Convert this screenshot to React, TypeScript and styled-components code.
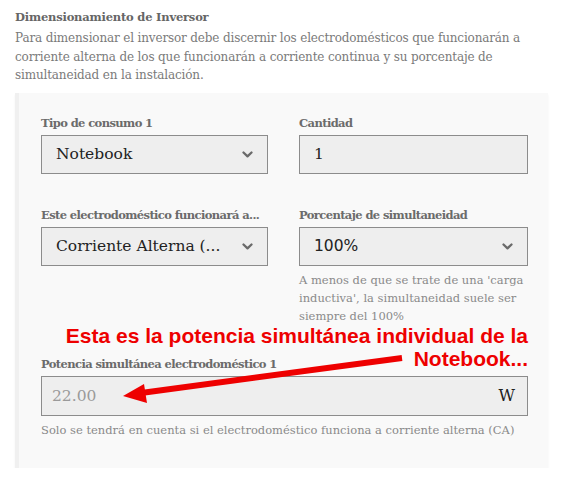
import React from 'react'
import styled, {createGlobalStyle} from 'styled-components';

const Global = createGlobalStyle`
  html, body { margin: 0; padding: 0; background: #fff; }
  body { font-family: "DejaVu Serif", "Liberation Serif", serif; }
`;

const Page = styled.div`
  padding: 8px 16px 0 15px;
  width: 564px;
  box-sizing: border-box;
`;

const Title = styled.div`
  font-size: 11.5px;
  font-weight: bold;
  color: #666;
  line-height: 18px;
  letter-spacing: -0.2px;
`;

const Intro = styled.p`
  margin: 3px 0 0;
  font-size: 12px;
  line-height: 18.5px;
  letter-spacing: -0.15px;
  color: #7a7a7a;
`;

const Panel = styled.div`
  position: relative;
  margin-top: 8px;
  background: #f9f9f9;
  border-left: 4px solid #f0f0f0;
  box-shadow: 0 2px 2px #f2f2f2;
  padding: 22px 19px 29px 22px;
`;

const Grid = styled.div`
  display: grid;
  grid-template-columns: 227px 229px;
  column-gap: 31px;
  row-gap: 33px;
`;

const Field = styled.div<{ $wide?: boolean }>`
  display: flex;
  flex-direction: column;
  grid-column: ${p => (p.$wide ? '1 / span 2' : 'auto')};
  margin-top: ${p => (p.$wide ? '-2px' : '0')};
`;

const Label = styled.label`
  font-size: 11.5px;
  font-weight: bold;
  color: #6b6b6b;
  line-height: 16px;
  letter-spacing: -0.6px;
  margin-bottom: 4px;
  white-space: nowrap;
`;

const Box = styled.div<{ $muted?: boolean }>`
  height: 39px;
  box-sizing: border-box;
  border: 1px solid #8c8c8c;
  background: #eeeeee;
  display: flex;
  align-items: center;
  padding: 0 14px;
  font-size: 15.5px;
  color: ${p => (p.$muted ? '#9a9a9a' : '#222')};
`;

const Value = styled.span<{ $sans?: boolean }>`
  flex: 1;
  white-space: nowrap;
  font-family: ${p => (p.$sans ? '"DejaVu Sans", "Liberation Sans", sans-serif' : 'inherit')};
`;

const Unit = styled.span`
  color: #222;
  font-size: 16px;
`;

const Help = styled.div`
  margin-top: 5px;
  font-size: 11.5px;
  line-height: 18px;
  color: #8a8a8a;
`;

const Note = styled.div`
  position: absolute;
  right: 20px;
  top: 231px;
  text-align: right;
  font-family: "Liberation Sans", Arial, sans-serif;
  font-weight: bold;
  font-size: 21px;
  line-height: 23px;
  color: #ee0000;
`;

const Arrow = styled.svg`
  position: absolute;
  left: 0;
  top: 0;
  pointer-events: none;
`;

const Chevron = () => (
  <svg width="11" height="7" viewBox="0 0 11 7">
    <path d="M1.5 1.5 L5.5 5.3 L9.5 1.5" fill="none" stroke="#6a6a6a" strokeWidth="2.3" strokeLinecap="round" strokeLinejoin="round"/>
  </svg>
);

export default function App() {
  return (
    <Page>
      <Global/>
      <Title>Dimensionamiento de Inversor</Title>
      <Intro>
        Para dimensionar el inversor debe discernir los electrodomésticos que funcionarán a corriente alterna de los que funcionarán a corriente continua y su porcentaje de simultaneidad en la instalación.
      </Intro>
      <Panel>
        <Grid>
          <Field>
            <Label>Tipo de consumo 1</Label>
            <Box><Value>Notebook</Value><Chevron/></Box>
          </Field>
          <Field>
            <Label>Cantidad</Label>
            <Box><Value>1</Value></Box>
          </Field>
          <Field>
            <Label>Este electrodoméstico funcionará a...</Label>
            <Box><Value>Corriente Alterna (...</Value><Chevron/></Box>
          </Field>
          <Field>
            <Label>Porcentaje de simultaneidad</Label>
            <Box><Value $sans>100%</Value><Chevron/></Box>
            <Help>A menos de que se trate de una 'carga inductiva', la simultaneidad suele ser siempre del 100%</Help>
          </Field>
          <Field $wide>
            <Label>Potencia simultánea electrodoméstico 1</Label>
            <Box $muted style={{paddingLeft: 10, paddingRight: 12, height: 40}}><Value>22.00</Value><Unit>W</Unit></Box>
            <Help>Solo se tendrá en cuenta si el electrodoméstico funciona a corriente alterna (CA)</Help>
          </Field>
        </Grid>
        <Note>Esta es la potencia simultánea individual de la<br/>Notebook...</Note>
        <Arrow width="530" height="380" viewBox="0 0 530 380">
          <line x1="383" y1="265" x2="122" y2="300" stroke="#ee0000" strokeWidth="6"/>
          <polygon points="104,303 125,291 128,310" fill="#ee0000"/>
        </Arrow>
      </Panel>
    </Page>
  );
}
